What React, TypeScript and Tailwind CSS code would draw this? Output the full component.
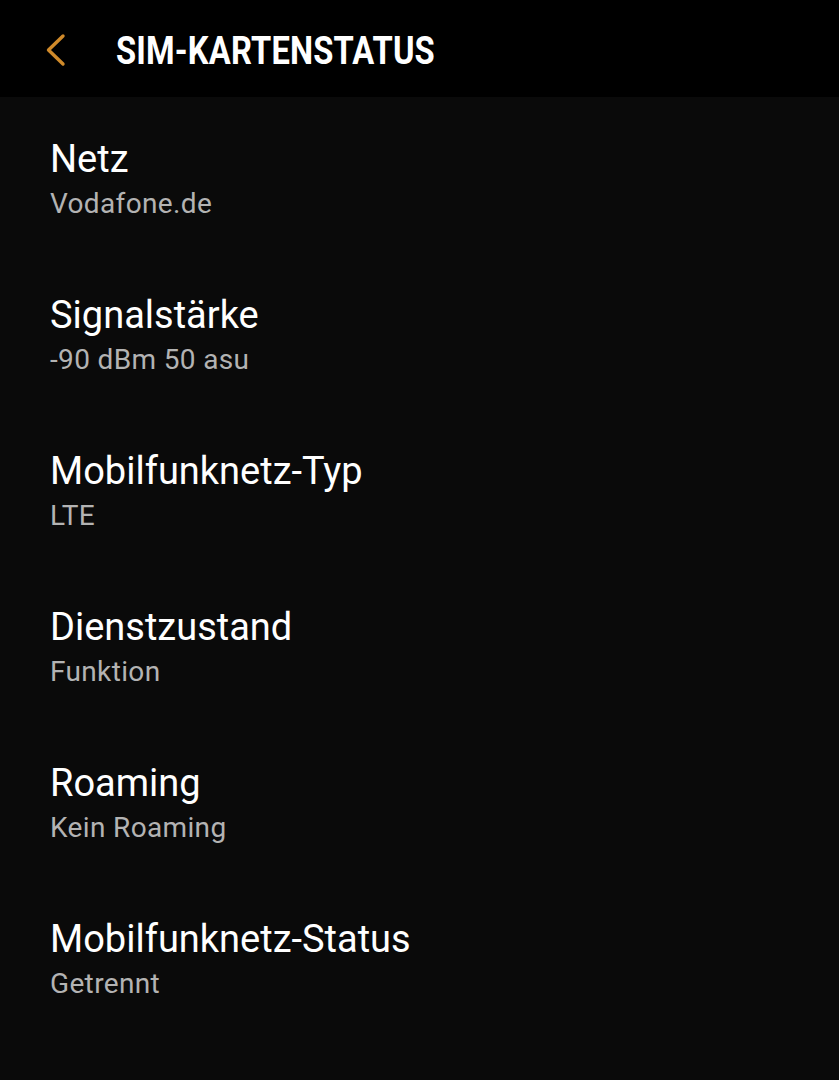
const ITEMS: { label: string; value: string }[] = [
  { label: "Netz", value: "Vodafone.de" },
  { label: "Signalstärke", value: "-90 dBm 50 asu" },
  { label: "Mobilfunknetz-Typ", value: "LTE" },
  { label: "Dienstzustand", value: "Funktion" },
  { label: "Roaming", value: "Kein Roaming" },
  { label: "Mobilfunknetz-Status", value: "Getrennt" },
];

export default function App() {
  return (
    <div className="flex h-[1080px] w-[839px] flex-col bg-[#0a0a0a] font-['Roboto',sans-serif]">
      {/* Header */}
      <div className="flex h-[97px] shrink-0 items-center bg-black">
        <button className="ml-[40px] mt-[2px] flex h-[40px] w-[30px] items-center justify-center">
          <svg width="24" height="34" viewBox="0 0 24 34" fill="none">
            <path
              d="M20 3 L5.5 17 L20 31"
              stroke="#d08a2a"
              strokeWidth="3.4"
              strokeLinecap="round"
              strokeLinejoin="round"
            />
          </svg>
        </button>
        <h1 className="ml-[46px] mt-[4px] origin-left scale-x-[0.86] text-[38px] font-bold leading-none tracking-[0.2px] text-white">
          SIM-KARTENSTATUS
        </h1>
      </div>

      {/* Status list */}
      <div className="flex flex-col">
        {ITEMS.map((item) => (
          <div key={item.label} className="flex h-[156px] flex-col pl-[50px] pt-[40px]">
            <span className="text-[38px] leading-[44px] text-white">{item.label}</span>
            <span className="mt-[7px] text-[28px] leading-[32px] tracking-[0.35px] text-[#b3b3b3]">
              {item.value}
            </span>
          </div>
        ))}
      </div>
    </div>
  );
}
